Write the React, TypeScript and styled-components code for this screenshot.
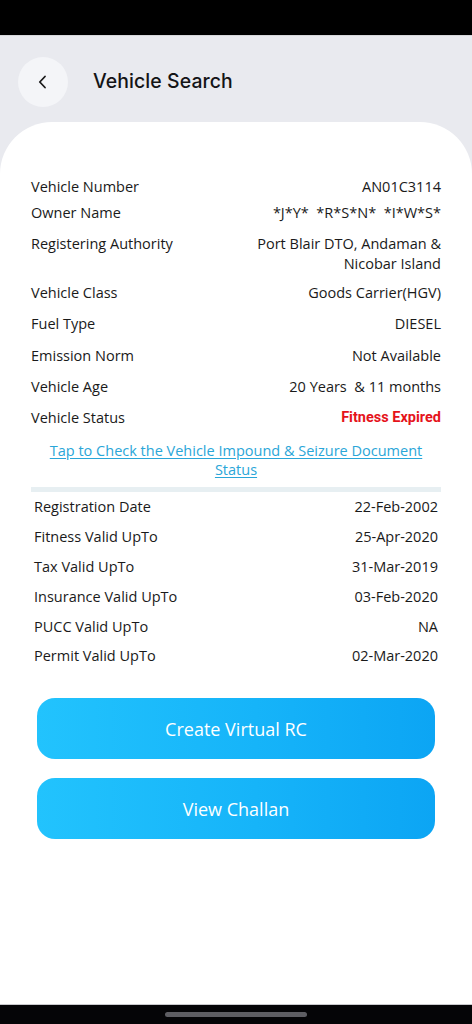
import React from 'react';
import styled, { createGlobalStyle } from 'styled-components';

const GlobalStyle = createGlobalStyle`
  *, *::before, *::after {
    box-sizing: border-box;
  }

  body {
    margin: 0;
    padding: 0;
    font-family: 'Open Sans', 'Noto Sans', sans-serif;
    background: #e9eaef;
    color: #1c1c1e;
  }
`;

const Screen = styled.div`
  display: flex;
  flex-direction: column;
  min-height: 1024px;
  background: #e9eaef;
`;

const StatusBar = styled.div`
  height: 36px;
  background: #000;
  border-bottom: 1px solid #d6d7db;
`;

const Header = styled.header`
  height: 86px;
  display: flex;
  align-items: center;
  gap: 25px;
  padding: 0 0 0 18px;
`;

const BackButton = styled.button`
  width: 50px;
  height: 50px;
  border-radius: 50%;
  border: none;
  background: #f4f5f8;
  display: flex;
  align-items: center;
  justify-content: center;
  padding: 0;
  margin-top: 6px;
`;

const Title = styled.h1`
  margin: 4px 0 0;
  font-family: 'Inter', 'Noto Sans', sans-serif;
  font-size: 19.4px;
  font-weight: 500;
  color: #141416;
  letter-spacing: 0.1px;
`;

const Card = styled.main`
  flex: 1;
  background: #fff;
  border-radius: 52px 52px 0 0;
  padding: 55px 31px 0;
  display: flex;
  flex-direction: column;
`;

const Details = styled.section`
  display: flex;
  flex-direction: column;
  gap: 11.4px;
`;

const RowGroup = styled.div`
  display: flex;
  flex-direction: column;
  gap: 6px;
`;

const Row = styled.div<{ $inset?: number; $wrapped?: boolean }>`
  display: flex;
  justify-content: space-between;
  align-items: flex-start;
  gap: 16px;
  padding: 0 ${(p) => p.$inset ?? 0}px;
  margin-bottom: ${(p) => (p.$wrapped ? -3 : 0)}px;
  font-size: 14.5px;
  line-height: 20px;
  color: #1a1a1a;
`;

const Label = styled.span`
  white-space: nowrap;
`;

const Value = styled.span<{ $status?: boolean; $wrapped?: boolean }>`
  text-align: right;
  max-width: 200px;
  white-space: ${(p) => (p.$wrapped ? 'normal' : 'pre')};
  ${(p) =>
    p.$status &&
    `
    font-family: Roboto, 'Open Sans', sans-serif;
    font-weight: 700;
    color: #e5131b;
  `}
`;

const ImpoundLink = styled.a`
  display: block;
  margin: 13px 12px 8px;
  text-align: center;
  font-size: 14.5px;
  line-height: 19px;
  color: #2aa6d8;
  text-decoration: underline;
  text-underline-offset: 2px;
`;

const Divider = styled.hr`
  margin: 0 0 5px;
  border: none;
  height: 5px;
  background: #e7eff2;
`;

const Validity = styled.section`
  display: flex;
  flex-direction: column;
  gap: 9.8px;
`;

const Actions = styled.div`
  display: flex;
  flex-direction: column;
  gap: 19px;
  margin: 32px 6px 0;
`;

const ActionButton = styled.button`
  height: 61px;
  border: none;
  border-radius: 18px;
  background: linear-gradient(90deg, #22c3fd 0%, #16b4f9 55%, #0ca5f4 100%);
  color: #fff;
  font-family: 'Open Sans', 'Noto Sans', sans-serif;
  font-size: 18px;
  font-weight: 500;
`;

const NavBar = styled.div`
  height: 20px;
  background: #050507;
  border-top: 1px solid #c9c9cc;
  display: flex;
  justify-content: center;
  padding-top: 7px;
`;

const HomeIndicator = styled.div`
  width: 142px;
  height: 5px;
  border-radius: 3px;
  background: #5e5e63;
`;

const ownerRows = [
  { label: 'Vehicle Number', value: 'AN01C3114' },
  { label: 'Owner Name', value: '*J*Y*  *R*S*N*  *I*W*S*' },
];

const vehicleRows = [
  { label: 'Registering Authority', value: 'Port Blair DTO, Andaman & Nicobar Island', wrapped: true },
  { label: 'Vehicle Class', value: 'Goods Carrier(HGV)' },
  { label: 'Fuel Type', value: 'DIESEL' },
  { label: 'Emission Norm', value: 'Not Available' },
  { label: 'Vehicle Age', value: '20 Years  & 11 months' },
];

const validityRows = [
  { label: 'Registration Date', value: '22-Feb-2002' },
  { label: 'Fitness Valid UpTo', value: '25-Apr-2020' },
  { label: 'Tax Valid UpTo', value: '31-Mar-2019' },
  { label: 'Insurance Valid UpTo', value: '03-Feb-2020' },
  { label: 'PUCC Valid UpTo', value: 'NA' },
  { label: 'Permit Valid UpTo', value: '02-Mar-2020' },
];

export default function App() {
  return (
    <Screen>
      <GlobalStyle />
      <StatusBar />
      <Header>
        <BackButton aria-label="Back">
          <svg width="16" height="16" viewBox="0 0 16 16" fill="none">
            <path d="M10 2.5 L4.8 8 L10 13.5" stroke="#1a1a1a" strokeWidth="1.8" strokeLinecap="round" strokeLinejoin="round" />
          </svg>
        </BackButton>
        <Title>Vehicle Search</Title>
      </Header>

      <Card>
        <Details>
          <RowGroup>
            {ownerRows.map((r) => (
              <Row key={r.label}>
                <Label>{r.label}</Label>
                <Value>{r.value}</Value>
              </Row>
            ))}
          </RowGroup>
          {vehicleRows.map((r) => (
            <Row key={r.label} $wrapped={r.wrapped}>
              <Label>{r.label}</Label>
              <Value $wrapped={r.wrapped}>{r.value}</Value>
            </Row>
          ))}
          <Row>
            <Label>Vehicle Status</Label>
            <Value $status>Fitness Expired</Value>
          </Row>
        </Details>

        <ImpoundLink href="#impound">Tap to Check the Vehicle Impound &amp; Seizure Document Status</ImpoundLink>
        <Divider />

        <Validity>
          {validityRows.map((r) => (
            <Row key={r.label} $inset={3}>
              <Label>{r.label}</Label>
              <Value>{r.value}</Value>
            </Row>
          ))}
        </Validity>

        <Actions>
          <ActionButton>Create Virtual RC</ActionButton>
          <ActionButton>View Challan</ActionButton>
        </Actions>
      </Card>

      <NavBar>
        <HomeIndicator />
      </NavBar>
    </Screen>
  );
}
